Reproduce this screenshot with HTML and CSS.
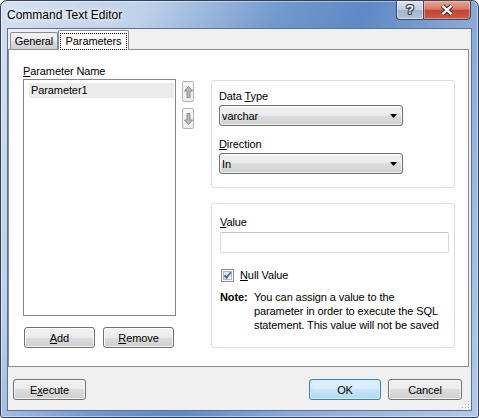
FILE: index.html
```html
<!DOCTYPE html>
<html lang="en">
<head>
<meta charset="utf-8">
<title>Command Text Editor</title>
<link rel="stylesheet" href="styles.css">
</head>
<body>
<div class="window">
  <div class="titlebar">
    <div class="title">Command Text Editor</div>
    <div class="caption-buttons">
      <div class="cap-btn help"><span class="help-glyph">?</span></div>
      <div class="cap-btn close">
        <svg width="14" height="12" viewBox="0 0 14 12">
          <path d="M2.5 1.8 L11.5 10.2 M11.5 1.8 L2.5 10.2" stroke="#3a2b2b" stroke-width="4.4" fill="none"/>
          <path d="M2.5 1.8 L11.5 10.2 M11.5 1.8 L2.5 10.2" stroke="#ffffff" stroke-width="2.4" fill="none"/>
        </svg>
      </div>
    </div>
  </div>
  <div class="client">
    <div class="tabs">
      <div class="tab">General</div>
      <div class="tab active"><span class="focus">Parameters</span></div>
    </div>
    <div class="panel">
      <div class="col-left">
        <div class="label"><u>P</u>arameter Name</div>
        <div class="listbox">
          <div class="item">Parameter1</div>
        </div>
        <div class="btn-row">
          <button class="btn small"><span><u>A</u>dd</span></button>
          <button class="btn small"><span><u>R</u>emove</span></button>
        </div>
      </div>
      <div class="col-arrows">
        <div class="arrow-btn">
          <svg width="9" height="12" viewBox="0 0 9 12"><polygon points="4.5,0.5 8.5,5 6,5 6,11.5 3,11.5 3,5 0.5,5" fill="#b9b9b9" stroke="#8f8f8f" stroke-width="1"/></svg>
        </div>
        <div class="arrow-btn">
          <svg width="9" height="12" viewBox="0 0 9 12"><polygon points="4.5,11.5 8.5,7 6,7 6,0.5 3,0.5 3,7 0.5,7" fill="#b9b9b9" stroke="#8f8f8f" stroke-width="1"/></svg>
        </div>
      </div>
      <div class="col-right">
        <div class="group g1">
          <div class="label">Data <u>T</u>ype</div>
          <div class="combo"><span>varchar</span>
            <svg width="7" height="4" viewBox="0 0 7 4"><polygon points="0,0 7,0 3.5,4" fill="#000"/></svg>
          </div>
          <div class="label second"><u>D</u>irection</div>
          <div class="combo"><span>In</span>
            <svg width="7" height="4" viewBox="0 0 7 4"><polygon points="0,0 7,0 3.5,4" fill="#000"/></svg>
          </div>
        </div>
        <div class="group g2">
          <div class="label"><u>V</u>alue</div>
          <div class="textbox"></div>
          <div class="check-row">
            <svg class="checkbox" width="13" height="13" viewBox="0 0 13 13">
              <defs>
                <linearGradient id="cbg" x1="0" y1="0" x2="1" y2="1">
                  <stop offset="0" stop-color="#d9dce0"/>
                  <stop offset="1" stop-color="#fbfbfb"/>
                </linearGradient>
              </defs>
              <rect x="0.5" y="0.5" width="12" height="12" fill="#f6f6f6" stroke="#8f8f8f"/>
              <rect x="2.5" y="2.5" width="8" height="8" fill="url(#cbg)" stroke="#b4b9c0"/>
              <path d="M3.3 6.3 L5.5 8.8 L9.9 3.3" fill="none" stroke="#4a67a6" stroke-width="1.8"/>
            </svg>
            <span class="check-label"><u>N</u>ull Value</span>
          </div>
          <div class="note">
            <span class="note-label">Note:</span>
            <span class="note-text">You can assign a value to the<br>parameter in order to execute the SQL<br>statement. This value will not be saved</span>
          </div>
        </div>
      </div>
    </div>
    <div class="footer">
      <button class="btn execute"><span>E<u>x</u>ecute</span></button>
      <div class="spacer"></div>
      <button class="btn default ok"><span>OK</span></button>
      <button class="btn cancel"><span>Cancel</span></button>
    </div>
    <svg class="grip" width="9" height="9" viewBox="0 0 9 9">
      <g fill="#ffffff">
        <rect x="8" y="2" width="1" height="1"/><rect x="5" y="5" width="1" height="1"/><rect x="8" y="5" width="1" height="1"/>
        <rect x="2" y="8" width="1" height="1"/><rect x="5" y="8" width="1" height="1"/><rect x="8" y="8" width="1" height="1"/>
      </g>
      <g fill="#b3b3b3">
        <rect x="7" y="1" width="1" height="1"/><rect x="4" y="4" width="1" height="1"/><rect x="7" y="4" width="1" height="1"/>
        <rect x="1" y="7" width="1" height="1"/><rect x="4" y="7" width="1" height="1"/><rect x="7" y="7" width="1" height="1"/>
      </g>
    </svg>
  </div>
</div>
</body>
</html>
```

FILE: styles.css
```css
* {
  box-sizing: border-box;
}

html,
body {
  margin: 0;
  padding: 0;
  background: #ffffff;
}

body {
  font-family: "Liberation Sans", Arial, sans-serif;
  font-size: 11px;
  letter-spacing: -0.1px;
  color: #000000;
}

u {
  text-decoration: underline;
  text-underline-offset: 1px;
}

.window {
  width: 479px;
  height: 418px;
  border: 1px solid #2f4058;
  border-radius: 7px 7px 3px 3px;
  background: linear-gradient(115deg, #d3e0f0 0%, #bed1ea 22%, #7399cd 42%, #5e89c5 55%, #8aabd7 72%, #b4cae7 100%);
  box-shadow: inset 0 0 0 1px rgba(255, 255, 255, 0.45);
  display: flex;
  flex-direction: column;
}

.titlebar {
  height: 27px;
  flex: none;
  display: flex;
  align-items: flex-start;
  justify-content: space-between;
}

.title {
  margin: 7px 0 0 6px;
  font-size: 12px;
  line-height: 15px;
  letter-spacing: 0;
  color: #000;
  text-shadow: 0 0 4px rgba(255, 255, 255, 0.95), 0 0 9px rgba(255, 255, 255, 0.9), 0 0 16px rgba(255, 255, 255, 0.75);
}

.caption-buttons {
  display: flex;
  margin: -1px 7px 0 0;
}

.cap-btn {
  height: 20px;
  border: 1px solid #3b4a5e;
  display: flex;
  align-items: center;
  justify-content: center;
}

.help {
  width: 27px;
  border-right: none;
  border-radius: 0 0 0 4px;
  background: linear-gradient(#dbe3ed 0%, #c2cfdf 48%, #a4b6cc 52%, #b2c3d8 100%);
  box-shadow: inset 0 0 0 1px rgba(255, 255, 255, 0.45);
}

.help-glyph {
  font-weight: bold;
  font-size: 13px;
  line-height: 14px;
  color: #ffffff;
  letter-spacing: 0;
  text-shadow: 1px 0 0 #3a4656, -1px 0 0 #3a4656, 0 1px 0 #3a4656, 0 -1px 0 #3a4656, 1px 1px 0 #3a4656, -1px -1px 0 #3a4656, 1px -1px 0 #3a4656, -1px 1px 0 #3a4656;
}

.close {
  width: 48px;
  border-radius: 0 0 4px 0;
  background: linear-gradient(#e7a595 0%, #d9796a 45%, #c14633 52%, #cc5a45 100%);
  box-shadow: inset 0 0 0 1px rgba(255, 210, 200, 0.45);
}

.client {
  position: relative;
  margin-left: 6px;
  width: 465px;
  height: 383px;
  border: 1px solid #5a7291;
  background: #f0f0f0;
  display: flex;
  flex-direction: column;
  flex: none;
}

.tabs {
  height: 20px;
  flex: none;
  display: flex;
  align-items: flex-end;
  padding-left: 2px;
}

.tab {
  height: 17px;
  width: 48px;
  border: 1px solid #898c95;
  border-bottom: none;
  border-radius: 2px 2px 0 0;
  background: linear-gradient(#f2f2f2 0%, #ebebeb 50%, #dddddd 50%, #cfcfcf 100%);
  display: flex;
  align-items: center;
  justify-content: center;
  line-height: 14px;
}

.tab.active {
  position: relative;
  height: 20px;
  width: 71px;
  margin-bottom: -1px;
  background: #ffffff;
  align-items: flex-start;
  padding: 2px 1px 0 1px;
}

.focus {
  display: flex;
  align-items: center;
  justify-content: center;
  width: 100%;
  height: 17px;
  border: 1px dotted #000000;
  padding-bottom: 1px;
}

.panel {
  width: 461px;
  height: 318px;
  flex: none;
  border: 1px solid #898c95;
  background: #ffffff;
  display: flex;
  align-items: flex-start;
  padding: 14px 0 0 14px;
}

.label {
  line-height: 14px;
  height: 14px;
  white-space: nowrap;
}

.col-left {
  width: 153px;
  display: flex;
  flex-direction: column;
}

.listbox {
  margin-top: 1px;
  height: 237px;
  border: 1px solid #828790;
  background: #ffffff;
  padding: 3px 1px 0 5px;
}

.item {
  height: 15px;
  line-height: 15px;
  padding-left: 2px;
  background: #ececec;
}

.btn-row {
  display: flex;
  gap: 8px;
  margin-top: 11px;
  padding-left: 1px;
}

.btn {
  height: 21px;
  padding: 0;
  margin: 0;
  border: 1px solid #707070;
  border-radius: 3px;
  background: linear-gradient(#f2f2f2 0%, #ebebeb 50%, #dddddd 50%, #cfcfcf 100%);
  box-shadow: inset 0 0 0 1px rgba(255, 255, 255, 0.75);
  font-family: inherit;
  font-size: 11px;
  letter-spacing: -0.1px;
  color: #000000;
  display: flex;
  align-items: center;
  justify-content: center;
  line-height: 14px;
}

.btn.small {
  width: 71px;
}

.col-arrows {
  margin: 17px 0 0 6px;
  width: 12px;
  display: flex;
  flex-direction: column;
  gap: 6px;
}

.arrow-btn {
  width: 12px;
  height: 21px;
  border: 1px solid #b1b5b9;
  border-radius: 2px;
  background: linear-gradient(#f8f8f8, #ececec);
  display: flex;
  align-items: center;
  justify-content: center;
}

.col-right {
  margin: 16px 0 0 17px;
  width: 244px;
  display: flex;
  flex-direction: column;
  gap: 15px;
}

.group {
  border: 1px solid #d5dfe5;
  border-radius: 3px;
  display: flex;
  flex-direction: column;
  align-items: flex-start;
}

.g1 {
  height: 108px;
  padding: 9px 0 0 7px;
}

.g1 .label {
  line-height: 13px;
  height: 13px;
}

.g1 .label.second {
  margin-top: 12px;
}

.combo {
  margin-top: 2px;
  width: 184px;
  height: 21px;
  border: 1px solid #707070;
  border-radius: 3px;
  background: linear-gradient(#f2f2f2 0%, #ebebeb 50%, #dddddd 50%, #cfcfcf 100%);
  box-shadow: inset 0 0 0 1px rgba(255, 255, 255, 0.7);
  display: flex;
  align-items: center;
  justify-content: space-between;
  padding: 0 5px 0 2px;
  line-height: 14px;
}

.g2 {
  height: 145px;
  padding: 12px 0 0 8px;
}

.g2 .label {
  line-height: 13px;
  height: 13px;
}

.textbox {
  margin-top: 3px;
  width: 229px;
  height: 21px;
  border: 1px solid #d6dae0;
  border-top-color: #bfc3c9;
  border-radius: 2px;
  background: #ffffff;
}

.check-row {
  margin-top: 16px;
  margin-left: 1px;
  height: 13px;
  display: flex;
  align-items: center;
}

.checkbox {
  flex: none;
  display: block;
}

.check-label {
  margin-left: 6px;
  line-height: 13px;
  margin-top: -1px;
}

.note {
  margin-top: 8px;
  display: flex;
  line-height: 14px;
  white-space: nowrap;
}

.note-label {
  width: 34px;
  font-weight: bold;
}

.footer {
  flex: 1;
  display: flex;
  align-items: flex-start;
  padding: 12px 9px 0 5px;
}

.execute {
  width: 73px;
}

.spacer {
  flex: 1;
}

.ok {
  width: 72px;
}

.cancel {
  width: 74px;
  margin-left: 7px;
}

.btn.default {
  border-color: #3c7fb1;
  background: linear-gradient(#e4f3fc 0%, #d5edfa 50%, #c4e5f8 50%, #b4dcf4 100%);
  box-shadow: inset 0 0 0 1px rgba(220, 242, 253, 0.9), inset 0 0 2px 1px rgba(150, 205, 240, 0.6);
}

.grip {
  position: absolute;
  right: 1px;
  bottom: 1px;
}
```
